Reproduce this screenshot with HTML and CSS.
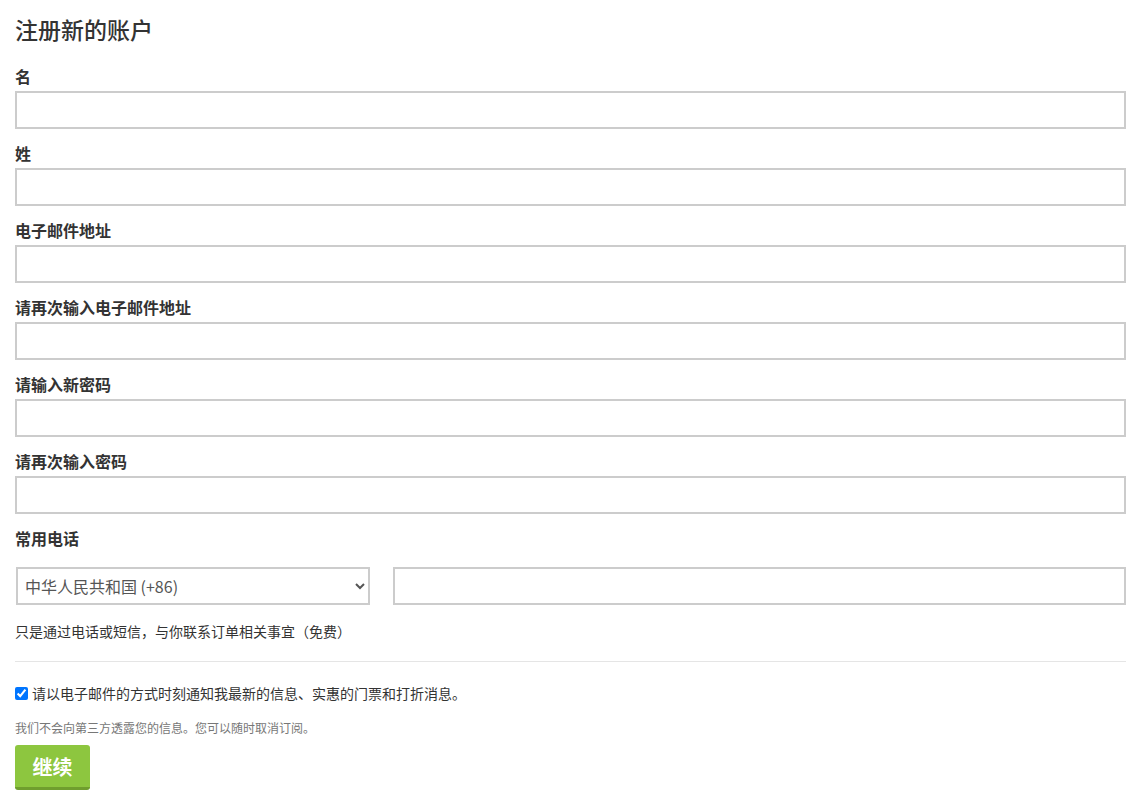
FILE: index.html
```html
<!doctype html>
<html lang="zh-CN">
  <head>
    <meta charset="UTF-8" />
    <meta name="viewport" content="width=device-width, initial-scale=1.0" />
    <title>注册新的账户</title>
    <link rel="stylesheet" href="styles.css">
  </head>
  <body>
    <form class="register-form" onsubmit="return false">
      <h1 class="register-title">注册新的账户</h1>

      <div class="form-field">
        <label class="field-label" for="firstName">名</label>
        <input class="field-input" id="firstName" type="text" />
      </div>

      <div class="form-field">
        <label class="field-label" for="lastName">姓</label>
        <input class="field-input" id="lastName" type="text" />
      </div>

      <div class="form-field">
        <label class="field-label" for="email">电子邮件地址</label>
        <input class="field-input" id="email" type="email" />
      </div>

      <div class="form-field">
        <label class="field-label" for="emailConfirm">请再次输入电子邮件地址</label>
        <input class="field-input" id="emailConfirm" type="email" />
      </div>

      <div class="form-field">
        <label class="field-label" for="password">请输入新密码</label>
        <input class="field-input" id="password" type="password" />
      </div>

      <div class="form-field">
        <label class="field-label" for="passwordConfirm">请再次输入密码</label>
        <input class="field-input" id="passwordConfirm" type="password" />
      </div>

      <div class="phone-field">
        <label class="field-label" for="phone">常用电话</label>
        <div class="phone-row">
          <select class="phone-country">
            <option>中华人民共和国 (+86)</option>
          </select>
          <input class="field-input" id="phone" type="tel" />
        </div>
        <p class="phone-help">只是通过电话或短信，与你联系订单相关事宜（免费）</p>
      </div>

      <hr class="divider" />

      <label class="newsletter">
        <input type="checkbox" checked />
        <span>请以电子邮件的方式时刻通知我最新的信息、实惠的门票和打折消息。</span>
      </label>

      <p class="privacy-note">我们不会向第三方透露您的信息。您可以随时取消订阅。</p>

      <button class="btn-continue" type="submit">继续</button>
    </form>
  </body>
</html>
```

FILE: styles.css
```css
* {
  margin: 0;
  padding: 0;
  box-sizing: border-box;
}

body {
  font-family: "Noto Sans CJK SC", "Liberation Sans", sans-serif;
  color: #333;
  background: white;
}

.register-form {
  padding: 13px 7px 0 15px;
}

.register-title {
  font-size: 23px;
  font-weight: 500;
  line-height: 32px;
  color: #333;
  margin-bottom: 20px;
}

.form-field {
  margin-bottom: 13px;
}

.field-label {
  display: block;
  font-size: 16px;
  font-weight: 700;
  line-height: 22px;
  margin-bottom: 4px;
}

.field-input {
  display: block;
  width: 100%;
  height: 38px;
  border: 2px solid #ccc;
  background: white;
  font-size: 16px;
  padding: 0 10px;
  font-family: inherit;
}

.phone-field .field-label {
  margin-bottom: 18px;
}

.phone-row {
  display: grid;
  grid-template-columns: 355px 1fr;
  gap: 23px;
}

.phone-country {
  height: 38px;
  margin-left: 1px;
  border: 2px solid #ccc;
  background: white;
  color: #555;
  font-family: inherit;
  font-size: 16px;
  padding: 0 3px;
}

.phone-help {
  font-size: 14px;
  line-height: 20px;
  margin-top: 16px;
}

.divider {
  border: none;
  border-top: 1px solid #e5e5e5;
  margin: 20px 0 21px;
}

.newsletter {
  display: flex;
  align-items: center;
  gap: 4px;
  font-size: 14px;
  line-height: 20px;
}

.newsletter input {
  width: 13px;
  height: 13px;
  margin: 0;
}

.privacy-note {
  font-size: 12px;
  line-height: 18px;
  color: #777;
  margin-top: 16px;
  margin-bottom: 8px;
}

.btn-continue {
  width: 75px;
  height: 45px;
  background: #8dc63f;
  border: none;
  border-bottom: 3px solid #6f9e2e;
  border-radius: 3px;
  color: white;
  font-family: inherit;
  font-size: 20px;
  font-weight: 700;
  cursor: pointer;
}
```
